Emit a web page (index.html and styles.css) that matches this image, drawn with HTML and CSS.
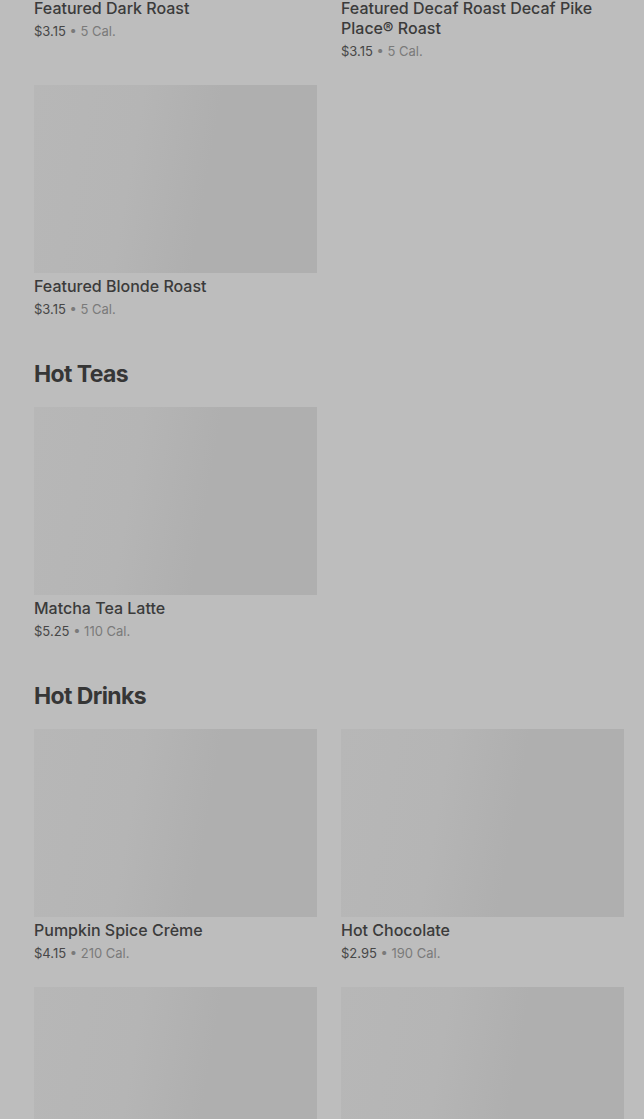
FILE: index.html
```html
<!DOCTYPE html>
<html lang="en">
<head>
    <meta charset="UTF-8">
    <meta name="viewport" content="width=device-width, initial-scale=1.0">
    <title>Menu</title>
    <link rel="stylesheet" href="styles.css">
</head>
<body>
    <main class="menu">
        <!-- featured coffee, scrolled partly out of view -->
        <section class="menu-section">
            <div class="item-grid">
                <div class="item">
                    <div class="item-img"></div>
                    <h3>Featured Dark Roast</h3>
                    <p class="meta"><span class="price">$3.15</span> • 5 Cal.</p>
                </div>
                <div class="item">
                    <div class="item-img"></div>
                    <h3>Featured Decaf Roast Decaf Pike Place® Roast</h3>
                    <p class="meta"><span class="price">$3.15</span> • 5 Cal.</p>
                </div>
                <div class="item">
                    <div class="item-img"></div>
                    <h3>Featured Blonde Roast</h3>
                    <p class="meta"><span class="price">$3.15</span> • 5 Cal.</p>
                </div>
            </div>
        </section>

        <section class="menu-section">
            <h2>Hot Teas</h2>
            <div class="item-grid">
                <div class="item">
                    <div class="item-img"></div>
                    <h3>Matcha Tea Latte</h3>
                    <p class="meta"><span class="price">$5.25</span> • 110 Cal.</p>
                </div>
            </div>
        </section>

        <section class="menu-section">
            <h2>Hot Drinks</h2>
            <div class="item-grid">
                <div class="item">
                    <div class="item-img"></div>
                    <h3>Pumpkin Spice Crème</h3>
                    <p class="meta"><span class="price">$4.15</span> • 210 Cal.</p>
                </div>
                <div class="item">
                    <div class="item-img"></div>
                    <h3>Hot Chocolate</h3>
                    <p class="meta"><span class="price">$2.95</span> • 190 Cal.</p>
                </div>
                <div class="item">
                    <div class="item-img"></div>
                </div>
                <div class="item">
                    <div class="item-img"></div>
                </div>
            </div>
        </section>
    </main>
</body>
</html>
```

FILE: styles.css
```css
body {
    margin: 0;
    background-color: #bdbdbd;
    font-family: Inter, "Noto Sans", sans-serif;
    color: #3b3b3b;
    overflow: hidden;
}

.menu {
    display: flex;
    flex-direction: column;
    gap: 39px;
    margin-top: -193px; /* page is scrolled */
    padding: 0 20px 0 34px;
}

.menu-section h2 {
    margin: 0 0 17px 0;
    font-size: 23px;
    line-height: 32px;
    font-weight: 700;
    letter-spacing: -0.6px;
    color: #363636;
}

.item-grid {
    display: grid;
    grid-template-columns: 1fr 1fr;
    gap: 24px;
}

.item-img {
    height: 188px;
    background: linear-gradient(100deg, #b7b7b7 0%, #b5b5b5 35%, #afafaf 60%, #afafaf 100%);
}

.item h3 {
    margin: 3px 0 0 0;
    font-size: 16px;
    line-height: 20px;
    font-weight: 500;
    color: #3b3b3b;
}

.meta {
    margin: 3px 0 0 0;
    font-size: 13px;
    line-height: 20px;
    color: #7a7a7a;
}

.price {
    color: #474747;
}
```
